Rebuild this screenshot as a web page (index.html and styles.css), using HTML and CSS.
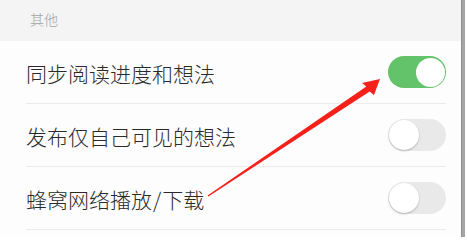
FILE: index.html
```html
<!DOCTYPE html>
<html lang="zh-CN">
<head>
<meta charset="utf-8">
<link rel="stylesheet" href="styles.css">
</head>
<body>
<div class="page">
  <div class="content">
    <div class="section-head">其他</div>
    <div class="list">
      <div class="row">
        <span class="label">同步阅读进度和想法</span>
        <span class="toggle on"><span class="knob"></span></span>
      </div>
      <div class="row">
        <span class="label">发布仅自己可见的想法</span>
        <span class="toggle"><span class="knob"></span></span>
      </div>
      <div class="row">
        <span class="label">蜂窝网络播放<span class="slash">/</span>下载</span>
        <span class="toggle"><span class="knob"></span></span>
      </div>
    </div>
  </div>
  <div class="scrollbar"></div>
  <svg class="arrow" width="467" height="237" viewBox="0 0 467 237">
    <polygon points="207.6,195.6 366.3,86.5 362,83 380,79 374,95 369.7,91.5 208.4,196.4" fill="#f5201a"/>
  </svg>
</div>
</body>
</html>
```

FILE: styles.css
```css
html, body {
  margin: 0;
  padding: 0;
  background: #ffffff;
}
.page {
  position: relative;
  display: flex;
  width: 467px;
  height: 237px;
  overflow: hidden;
  font-family: "Noto Sans CJK SC", "Noto Sans", sans-serif;
}
.content {
  flex: 1;
  background: #fdfdfd;
}
.section-head {
  height: 41px;
  box-sizing: border-box;
  padding-left: 30px;
  padding-top: 9px;
  background: #f4f4f4;
  color: #a3a3a3;
  font-size: 14px;
  font-weight: 300;
  line-height: 20px;
}
.list {
  padding-left: 26px;
  padding-right: 15px;
}
.row {
  height: 62px;
  border-bottom: 1px solid #ececec;
  display: flex;
  align-items: center;
  justify-content: space-between;
}
.label {
  font-size: 21px;
  font-weight: 300;
  color: #2a2a2a;
  line-height: 26px;
  padding-top: 2px;
}
.slash {
  padding: 0 1px;
}
.toggle {
  width: 58px;
  height: 32px;
  box-sizing: border-box;
  border-radius: 16px;
  background: #e9e9e9;
  display: flex;
  align-items: center;
  padding: 0 1px;
}
.toggle .knob {
  width: 30px;
  height: 30px;
  border-radius: 50%;
  background: #ffffff;
  box-shadow: 0 1px 2px rgba(0,0,0,0.25);
}
.toggle.on {
  background: #62c36a;
  justify-content: flex-end;
  padding: 0 1.5px;
}
.toggle.on .knob {
  width: 29px;
  height: 29px;
  box-shadow: none;
}
.scrollbar {
  width: 3px;
  margin-right: 2px;
  background: #a4a4a4;
  border-left: 1px solid #8e8e8e;
}
.arrow {
  position: absolute;
  left: 0;
  top: 0;
  pointer-events: none;
}
```
